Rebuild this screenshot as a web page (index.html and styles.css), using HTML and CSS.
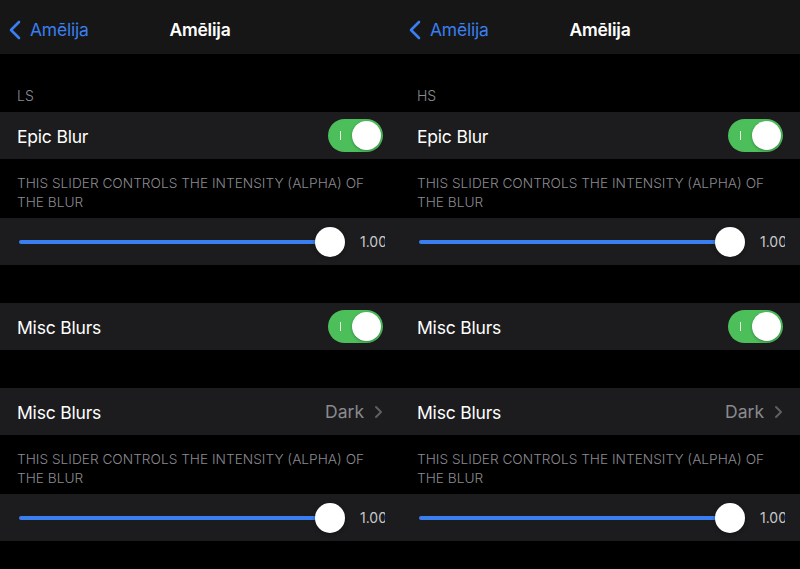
FILE: index.html
```html
<!DOCTYPE html>
<html>
<head>
<meta charset="utf-8">
<link rel="stylesheet" href="styles.css">
</head>
<body>
<div class="screen">
  <div class="panel">
    <div class="nav">
      <div class="back">
        <svg class="chev" width="14" height="20" viewBox="0 0 14 20"><path d="M11 2 L3 10 L11 18" fill="none" stroke="#3a7ef0" stroke-width="2.6" stroke-linecap="round" stroke-linejoin="round"/></svg>
        <span>Amēlija</span>
      </div>
      <div class="title">Amēlija</div>
    </div>
    <div class="header">LS</div>
    <div class="row"><span class="label">Epic Blur</span><span class="toggle"><span class="mark"></span><span class="knob"></span></span></div>
    <div class="footer">THIS SLIDER CONTROLS THE INTENSITY (ALPHA) OF THE BLUR</div>
    <div class="row slider-row"><div class="track"><div class="fill"></div><div class="thumb"></div></div><div class="value"><span>1.00</span></div></div>
    <div class="gap"></div>
    <div class="row"><span class="label">Misc Blurs</span><span class="toggle"><span class="mark"></span><span class="knob"></span></span></div>
    <div class="gap"></div>
    <div class="row"><span class="label">Misc Blurs</span><span class="detail">Dark<svg class="disc" width="9" height="14" viewBox="0 0 9 14"><path d="M2 2 L7 7 L2 12" fill="none" stroke="#5e5e63" stroke-width="2" stroke-linecap="round" stroke-linejoin="round"/></svg></span></div>
    <div class="footer">THIS SLIDER CONTROLS THE INTENSITY (ALPHA) OF THE BLUR</div>
    <div class="row slider-row"><div class="track"><div class="fill"></div><div class="thumb"></div></div><div class="value"><span>1.00</span></div></div>
  </div>
  <div class="panel">
    <div class="nav">
      <div class="back">
        <svg class="chev" width="14" height="20" viewBox="0 0 14 20"><path d="M11 2 L3 10 L11 18" fill="none" stroke="#3a7ef0" stroke-width="2.6" stroke-linecap="round" stroke-linejoin="round"/></svg>
        <span>Amēlija</span>
      </div>
      <div class="title">Amēlija</div>
    </div>
    <div class="header">HS</div>
    <div class="row"><span class="label">Epic Blur</span><span class="toggle"><span class="mark"></span><span class="knob"></span></span></div>
    <div class="footer">THIS SLIDER CONTROLS THE INTENSITY (ALPHA) OF THE BLUR</div>
    <div class="row slider-row"><div class="track"><div class="fill"></div><div class="thumb"></div></div><div class="value"><span>1.00</span></div></div>
    <div class="gap"></div>
    <div class="row"><span class="label">Misc Blurs</span><span class="toggle"><span class="mark"></span><span class="knob"></span></span></div>
    <div class="gap"></div>
    <div class="row"><span class="label">Misc Blurs</span><span class="detail">Dark<svg class="disc" width="9" height="14" viewBox="0 0 9 14"><path d="M2 2 L7 7 L2 12" fill="none" stroke="#5e5e63" stroke-width="2" stroke-linecap="round" stroke-linejoin="round"/></svg></span></div>
    <div class="footer">THIS SLIDER CONTROLS THE INTENSITY (ALPHA) OF THE BLUR</div>
    <div class="row slider-row"><div class="track"><div class="fill"></div><div class="thumb"></div></div><div class="value"><span>1.00</span></div></div>
  </div>
</div>
</body>
</html>
```
FILE: styles.css
```css
* { box-sizing: border-box; }
html, body { margin: 0; padding: 0; background: #000; }
body { font-family: Inter, "Open Sans", "Liberation Sans", sans-serif; color: #fff; width: 800px; height: 569px; overflow: hidden; }
.screen { display: flex; width: 800px; height: 569px; }
.panel { width: 400px; display: flex; flex-direction: column; overflow: hidden; }
.nav { height: 54px; padding-top: 5px; background: #161616; display: flex; align-items: center; position: relative; }
.back { display: flex; align-items: center; padding-left: 8px; color: #3a7ef0; font-size: 17.5px; letter-spacing: -0.2px; }
.back span { margin-left: 8px; }
.title { position: absolute; left: 0; right: 0; top: 5px; bottom: 0; display: flex; align-items: center; justify-content: center; font-size: 17.5px; font-weight: 600; letter-spacing: -0.2px; pointer-events: none; }
.header { height: 58px; padding: 0 17px 7px; display: flex; align-items: flex-end; color: #8a8a8f; font-size: 14px; line-height: 18px; font-weight: 300; }
.row { height: 47px; padding-top: 2px; background: #1c1c1e; display: flex; align-items: center; justify-content: space-between; padding-left: 17px; padding-right: 17px; }
.label { font-size: 17.5px; letter-spacing: -0.2px; }
.toggle { width: 55px; height: 33px; border-radius: 17px; background: #4cbf5a; position: relative; margin-top: -2px; }
.mark { position: absolute; left: 12px; top: 12px; width: 1px; height: 9px; background: #e8f7ea; }
.knob { position: absolute; right: 2px; top: 2px; width: 29px; height: 29px; border-radius: 50%; background: #fff; box-shadow: 0 1px 3px rgba(0,0,0,0.3); }
.footer { height: 59px; padding: 15px 10px 0 17px; color: #8a8a8f; font-size: 13.7px; line-height: 19px; letter-spacing: 0; font-weight: 300; }
.slider-row { justify-content: flex-start; padding: 0 0 0 19px; }
.track { width: 312px; height: 4px; position: relative; }
.fill { position: absolute; left: 0; right: 0; top: 0; bottom: 0; background: #3a7ef0; border-radius: 2px; }
.thumb { position: absolute; right: -14px; top: -13px; width: 30px; height: 30px; border-radius: 50%; background: #fff; box-shadow: 0 1px 4px rgba(0,0,0,0.35); }
.value { margin-left: 29px; width: 25px; overflow: hidden; white-space: nowrap; font-size: 14px; color: #c8c8cc; }
.gap { height: 38px; }
.detail { display: flex; align-items: center; color: #8a8a8f; font-size: 17.5px; margin-top: -2px; }
.disc { margin-left: 10px; }
```
